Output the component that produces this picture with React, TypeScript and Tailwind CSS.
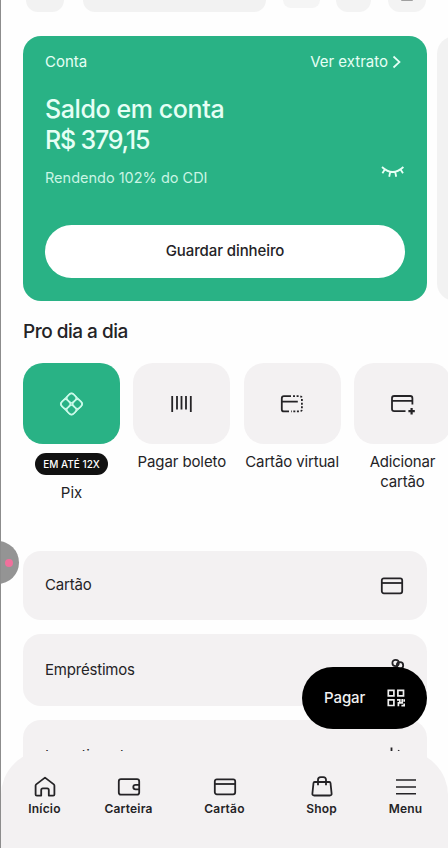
import type { ReactNode } from 'react'

interface Shortcut {
  label: string;
  icon: ReactNode;
  labelClass: string;
  badge?: string;
  active?: boolean;
}

function Icon({ size = 24, stroke = 1.8, children }: { size?: number; stroke?: number; children: ReactNode }) {
  return (
    <svg
      width={size}
      height={size}
      viewBox="0 0 24 24"
      fill="none"
      stroke="currentColor"
      strokeWidth={stroke}
      strokeLinejoin="round"
      className="shrink-0 overflow-visible"
      aria-hidden="true"
    >
      {children}
    </svg>
  )
}

function CardIcon() {
  return (
    <Icon>
      <rect x="1.8" y="4.3" width="20.4" height="15" rx="2" />
      <path d="M1.8 9h20.4" />
    </Icon>
  )
}

// rounded diamond made of four rounded cells
function PixIcon() {
  return (
    <Icon stroke={1.5}>
      <g transform="translate(-0.5 0) rotate(45 12 12)">
        <rect x="3.6" y="3.6" width="16.8" height="16.8" rx="3.6" />
        <rect x="3.6" y="3.6" width="8.4" height="8.4" rx="3" />
        <rect x="12" y="3.6" width="8.4" height="8.4" rx="3" />
        <rect x="3.6" y="12" width="8.4" height="8.4" rx="3" />
        <rect x="12" y="12" width="8.4" height="8.4" rx="3" />
      </g>
    </Icon>
  )
}

function BarcodeIcon() {
  return (
    <Icon>
      <path d="M2.200 4v16M7 4v13.500M11.500 4v13.500M16 4v13.500M20.800 4v16" />
    </Icon>
  )
}

function VirtualCardIcon() {
  return (
    <Icon>
      <path d="M11 4.200H4Q1.800 4.200 1.800 6.400v11Q1.800 19.400 4 19.400h5M1.800 9.600h16" />
      <path d="M13 4.200H19.500Q21.900 4.200 21.900 6.400v11Q21.900 19.400 19.500 19.400h-8.500" strokeDasharray="2 1.600" />
    </Icon>
  )
}

function AddCardIcon() {
  return (
    <Icon>
      <path d="M15.500 19.200H4.200Q2 19.200 2 17V6.200Q2 4 4.200 4h16q2.200 0 2.200 2.200v6.200M2 8.800h20.400" />
      <path d="M21.600 16v6.400M18.400 19.200h6.400" strokeWidth="2.200" />
    </Icon>
  )
}

function WalletIcon() {
  return (
    <Icon>
      <rect x="1.8" y="4.2" width="20.4" height="15.4" rx="2.2" />
      <path d="M22.200 9.800h-3.600a2.300 2.300 0 0 0 0 4.600h3.600" />
    </Icon>
  )
}

function HomeIcon() {
  return (
    <Icon>
      <path d="M2.600 10.800Q2.600 10 3.200 9.400L12 2.600l8.800 6.800q.6.600.6 1.400V19.400q0 1.200-1.200 1.200h-4.400v-5.600q0-1.600-1.600-1.600h-4.400q-1.600 0-1.600 1.600v5.600H3.800q-1.200 0-1.200-1.200z" />
    </Icon>
  )
}

function BagIcon() {
  return (
    <Icon>
      <path d="M4.600 7h14.800q1 0 1.100 1l1.100 10.500q.2 2-1.800 2H4.200q-2 0-1.800-2L3.500 8q.1-1 1.100-1z" />
      <path d="M8 10.200V4.800q0-2.700 2.700-2.700h2.600Q16 2.100 16 4.800v5.400" />
    </Icon>
  )
}

function MenuIcon() {
  return (
    <Icon stroke={1.6}>
      <path d="M2 5h20M2 12h20M2 18.800h20" />
    </Icon>
  )
}

function ClosedEyeIcon() {
  return (
    <Icon stroke={1.8}>
      <path d="M1 7Q11.700 17 22.400 7M3.800 9.400l-2.400 3.800M9.200 12l-1 4.800M14.200 12l1 4.800M19.600 9.400l2.400 3.800" />
    </Icon>
  )
}

function QrIcon() {
  return (
    <svg width="18" height="18" viewBox="0 0 18 18" fill="none" stroke="currentColor" strokeWidth="1.700" aria-hidden="true">
      <path d="M1.300 1.300h5.600v5.600H1.300zM10.900 1.300h5.600v5.600h-5.600zM1.300 10.900h5.600v5.600H1.300z" />
      <path d="M10 10.900h2.800v3M15.200 10v3.800h-3.800v3.400M17.200 12.800v-2.600M14.400 16.600h2.800v-2" />
    </svg>
  )
}

function CoinsIcon() {
  return (
    <Icon>
      <circle cx="15.600" cy="5" r="3.200" />
      <circle cx="20" cy="7.400" r="3.200" />
      <path d="M2 15h5l5 2h4M2 20h14l6-4" />
    </Icon>
  )
}

function ChartIcon() {
  return (
    <Icon>
      <path d="M11.500 3.500v16M18 6.500l6 6" />
    </Icon>
  )
}

const shortcuts: Shortcut[] = [
  { label: 'Pix', icon: <PixIcon />, labelClass: 'tracking-[0px]', badge: 'EM ATÉ 12X', active: true },
  { label: 'Pagar boleto', icon: <BarcodeIcon />, labelClass: 'tracking-[-0.1px]' },
  { label: 'Cartão virtual', icon: <VirtualCardIcon />, labelClass: 'tracking-[-0.15px]' },
  { label: 'Adicionar cartão', icon: <AddCardIcon />, labelClass: 'tracking-[-0.2px]' },
]

const products = [
  { name: 'Cartão', icon: <CardIcon />, box: 'h-[69px]' },
  { name: 'Empréstimos', icon: <CoinsIcon />, box: 'h-[72px]' },
  { name: 'Investimentos', icon: <ChartIcon />, box: 'h-[72px]' },
]

const tabs = [
  { name: 'Início', icon: <HomeIcon /> },
  { name: 'Carteira', icon: <WalletIcon /> },
  { name: 'Cartão', icon: <CardIcon /> },
  { name: 'Shop', icon: <BagIcon /> },
  { name: 'Menu', icon: <MenuIcon /> },
]

export default function App() {
  return (
    <div className="relative flex h-[848px] w-[448px] flex-col overflow-hidden border-l border-[#8c8c8c] bg-[#fefefe] pl-[22px] font-['Inter',sans-serif] text-[#242326]">
      <header className="flex h-9 shrink-0 items-start pl-[3px]">
        <div className="h-3 w-[38px] rounded-b-[14px] bg-[#f2f2f2]" />
        <div className="ml-[19px] h-3 w-[183px] rounded-b-[14px] bg-[#f2f2f2]" />
        <div className="ml-[17px] h-2 w-[37px] rounded-b-[14px] bg-[#f5f5f5]" />
        <div className="ml-4 h-3 w-[35px] rounded-b-[14px] bg-[#f3f3f3]" />
        <div className="ml-[17px] flex h-3 w-[38px] justify-center rounded-b-[14px] bg-[#f3f3f3]">
          <span className="h-px w-3 rounded-b-full bg-[#a0a0a0]" />
        </div>
      </header>

      <section className="flex shrink-0 gap-[10px]">
        <div className="flex h-[265px] w-[404px] shrink-0 flex-col rounded-[18px] bg-[#29b285] px-[22px] pt-4 text-[#e6fff5]">
          <div className="flex h-5 items-center justify-between text-[15px] leading-5">
            <span>Conta</span>
            <span className="flex items-center gap-1 pr-1">
              Ver extrato
              <svg width="9" height="14" viewBox="0 0 9 14" fill="none" stroke="currentColor" strokeWidth="1.700" aria-hidden="true">
                <path d="M1.500 1.500L7.500 7l-6 5.500" />
              </svg>
            </span>
          </div>
          <h1 className="mt-[22px] text-[25px] leading-[31px] font-medium tracking-[-0.4px]">
            Saldo em conta
            <span className="block tracking-[-1.2px]">R$ 379,15</span>
          </h1>
          <div className="mt-[4px] flex h-[30px] justify-between">
            <span className="pt-[8px] text-[14.500px] leading-5 text-[#c9f5e4]">Rendendo 102% do CDI</span>
            <ClosedEyeIcon />
          </div>
          <button type="button" className="mt-[35px] h-[53px] shrink-0 rounded-full bg-white text-[15px] font-medium tracking-[-0.1px] text-[#242326]">
            Guardar dinheiro
          </button>
        </div>
        <div className="h-[265px] w-[60px] shrink-0 rounded-[18px] bg-[#f2f2f2]" />
      </section>

      <h2 className="mt-[18px] shrink-0 text-[19px] leading-[26px] font-medium tracking-[-0.5px]">Pro dia a dia</h2>

      <section className="mt-[18px] flex h-[188px] shrink-0 gap-[13.300px]">
        {shortcuts.map((item) => (
          <div key={item.label} className="flex w-[97px] shrink-0 flex-col items-center">
            <div
              className={
                item.active
                  ? 'flex h-[81px] w-full items-center justify-center rounded-[20px] bg-[#29b285] text-[#c9f9e8]'
                  : 'flex h-[81px] w-full items-center justify-center rounded-[20px] bg-[#f3f1f2]'
              }
            >
              {item.icon}
            </div>
            {item.badge && (
              <span className="mt-[9px] flex h-[22px] w-[73px] items-center justify-center rounded-full bg-[#111111] text-[10px] font-medium text-white">
                {item.badge}
              </span>
            )}
            <span className={`mt-2 text-center text-[15px] leading-5 ${item.labelClass}`}>{item.label}</span>
          </div>
        ))}
      </section>

      <section className="flex shrink-0 flex-col gap-[14px]">
        {products.map((product) => (
          <div
            key={product.name}
            className={`flex w-[404px] items-center justify-between rounded-[18px] bg-[#f3f1f2] pr-[23px] pl-[22px] text-[15px] tracking-[-0.2px] ${product.box}`}
          >
            <span>{product.name}</span>
            {product.icon}
          </div>
        ))}
      </section>

      {/* floating bubble, half off screen */}
      <div className="absolute top-[541px] -left-[25px] flex h-[43px] w-[43px] items-center justify-end rounded-full bg-[#949494] pr-[6px]">
        <span className="size-2 rounded-full bg-[#f0709c]" />
      </div>

      <button
        type="button"
        className="absolute right-[21px] bottom-[119px] flex h-[62px] w-[125px] items-center justify-between rounded-full bg-black px-[22px] text-[15px] font-medium tracking-[-0.1px] text-[#f0f0f0]"
      >
        Pagar
        <QrIcon />
      </button>

      <nav className="absolute inset-x-0 bottom-0 grid h-[97px] grid-cols-[87px_81px_111px_83px_85px] items-start rounded-t-[44px] bg-[#f3f1f2] pt-6">
        {tabs.map((tab) => (
          <div key={tab.name} className="flex flex-col items-center">
            {tab.icon}
            <span className="mt-[2px] text-[12px] leading-4 font-semibold tracking-[0.2px]">{tab.name}</span>
          </div>
        ))}
      </nav>
    </div>
  )
}
